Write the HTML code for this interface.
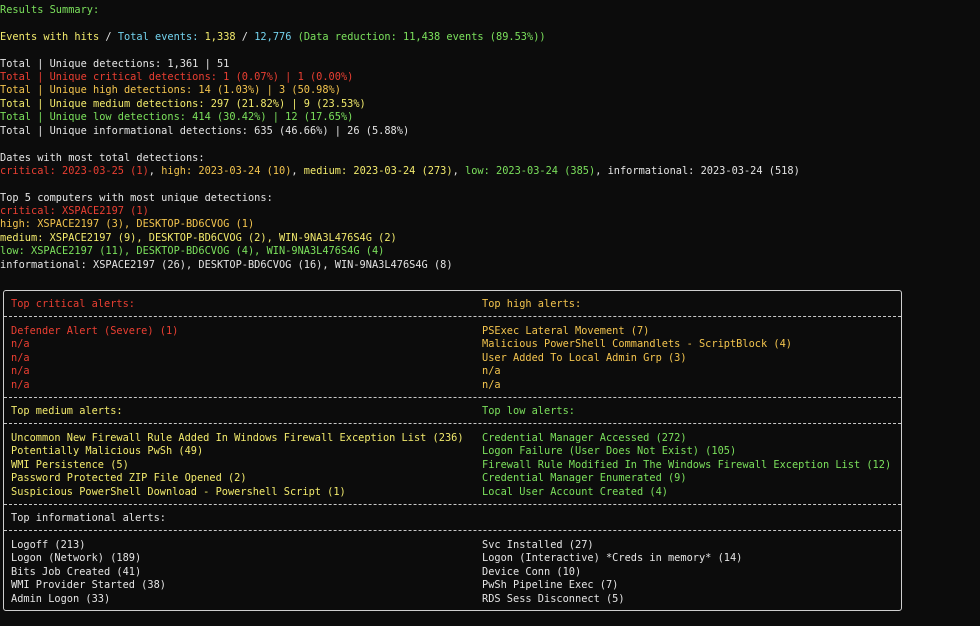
<!DOCTYPE html>
<html><head><meta charset="utf-8"><style>
html,body{margin:0;padding:0;background:#0c0c0c;width:980px;height:626px;overflow:hidden}
body{font-family:"DejaVu Sans Mono","Liberation Mono",monospace;font-size:10.3px;color:#e4e4e4;position:relative}
.l{position:absolute;left:0;white-space:pre;line-height:13.4px;height:13.4px}
.g{color:#7be05c}.y{color:#f2ea6c}.c{color:#74d3ee}.r{color:#ea3f32}.o{color:#f3c44e}.w{color:#e4e4e4}
.box{position:absolute;left:3px;top:290px;width:897px;height:319px;border:1px solid #cfcfcf;border-radius:3px}
.d{position:absolute;left:0;right:0;border-top:1px dashed #c8c8c8}
.b{position:absolute;white-space:pre;line-height:13.4px}
</style></head><body>
<div class="l g" style="top:3.5px">Results Summary:</div>
<div class="l" style="top:30.5px"><span class="y">Events with hits</span> / <span class="c">Total events:</span> <span class="y">1,338</span> / <span class="c">12,776</span> <span class="g">(Data reduction: 11,438 events (89.53%))</span></div>
<div class="l w" style="top:57.5px">Total | Unique detections: 1,361 | 51</div>
<div class="l r" style="top:70.9px">Total | Unique critical detections: 1 (0.07%) | 1 (0.00%)</div>
<div class="l o" style="top:84.3px">Total | Unique high detections: 14 (1.03%) | 3 (50.98%)</div>
<div class="l y" style="top:97.7px">Total | Unique medium detections: 297 (21.82%) | 9 (23.53%)</div>
<div class="l g" style="top:111.1px">Total | Unique low detections: 414 (30.42%) | 12 (17.65%)</div>
<div class="l w" style="top:124.5px">Total | Unique informational detections: 635 (46.66%) | 26 (5.88%)</div>
<div class="l w" style="top:151.5px">Dates with most total detections:</div>
<div class="l" style="top:164.9px"><span class="r">critical: 2023-03-25 (1)</span>, <span class="o">high: 2023-03-24 (10)</span>, <span class="y">medium: 2023-03-24 (273)</span>, <span class="g">low: 2023-03-24 (385)</span>, informational: 2023-03-24 (518)</div>
<div class="l w" style="top:191.5px">Top 5 computers with most unique detections:</div>
<div class="l r" style="top:204.9px">critical: XSPACE2197 (1)</div>
<div class="l o" style="top:218.3px">high: XSPACE2197 (3), DESKTOP-BD6CVOG (1)</div>
<div class="l y" style="top:231.7px">medium: XSPACE2197 (9), DESKTOP-BD6CVOG (2), WIN-9NA3L476S4G (2)</div>
<div class="l g" style="top:245.1px">low: XSPACE2197 (11), DESKTOP-BD6CVOG (4), WIN-9NA3L476S4G (4)</div>
<div class="l w" style="top:258.5px">informational: XSPACE2197 (26), DESKTOP-BD6CVOG (16), WIN-9NA3L476S4G (8)</div>

<div class="box">
<div class="d" style="top:25px"></div>
<div class="d" style="top:106px"></div>
<div class="d" style="top:132px"></div>
<div class="d" style="top:213px"></div>
<div class="d" style="top:239px"></div>
<div class="b r" style="left:7px;top:7px">Top critical alerts:</div>
<div class="b o" style="left:478px;top:7px">Top high alerts:</div>
<div class="b r" style="left:7px;top:34px">Defender Alert (Severe) (1)
n/a
n/a
n/a
n/a</div>
<div class="b o" style="left:478px;top:34px">PSExec Lateral Movement (7)
Malicious PowerShell Commandlets - ScriptBlock (4)
User Added To Local Admin Grp (3)
n/a
n/a</div>
<div class="b y" style="left:7px;top:114px">Top medium alerts:</div>
<div class="b g" style="left:478px;top:114px">Top low alerts:</div>
<div class="b y" style="left:7px;top:141px">Uncommon New Firewall Rule Added In Windows Firewall Exception List (236)
Potentially Malicious PwSh (49)
WMI Persistence (5)
Password Protected ZIP File Opened (2)
Suspicious PowerShell Download - Powershell Script (1)</div>
<div class="b g" style="left:478px;top:141px">Credential Manager Accessed (272)
Logon Failure (User Does Not Exist) (105)
Firewall Rule Modified In The Windows Firewall Exception List (12)
Credential Manager Enumerated (9)
Local User Account Created (4)</div>
<div class="b w" style="left:7px;top:221px">Top informational alerts:</div>
<div class="b w" style="left:7px;top:248px">Logoff (213)
Logon (Network) (189)
Bits Job Created (41)
WMI Provider Started (38)
Admin Logon (33)</div>
<div class="b w" style="left:478px;top:248px">Svc Installed (27)
Logon (Interactive) *Creds in memory* (14)
Device Conn (10)
PwSh Pipeline Exec (7)
RDS Sess Disconnect (5)</div>
</div>
</body></html>
